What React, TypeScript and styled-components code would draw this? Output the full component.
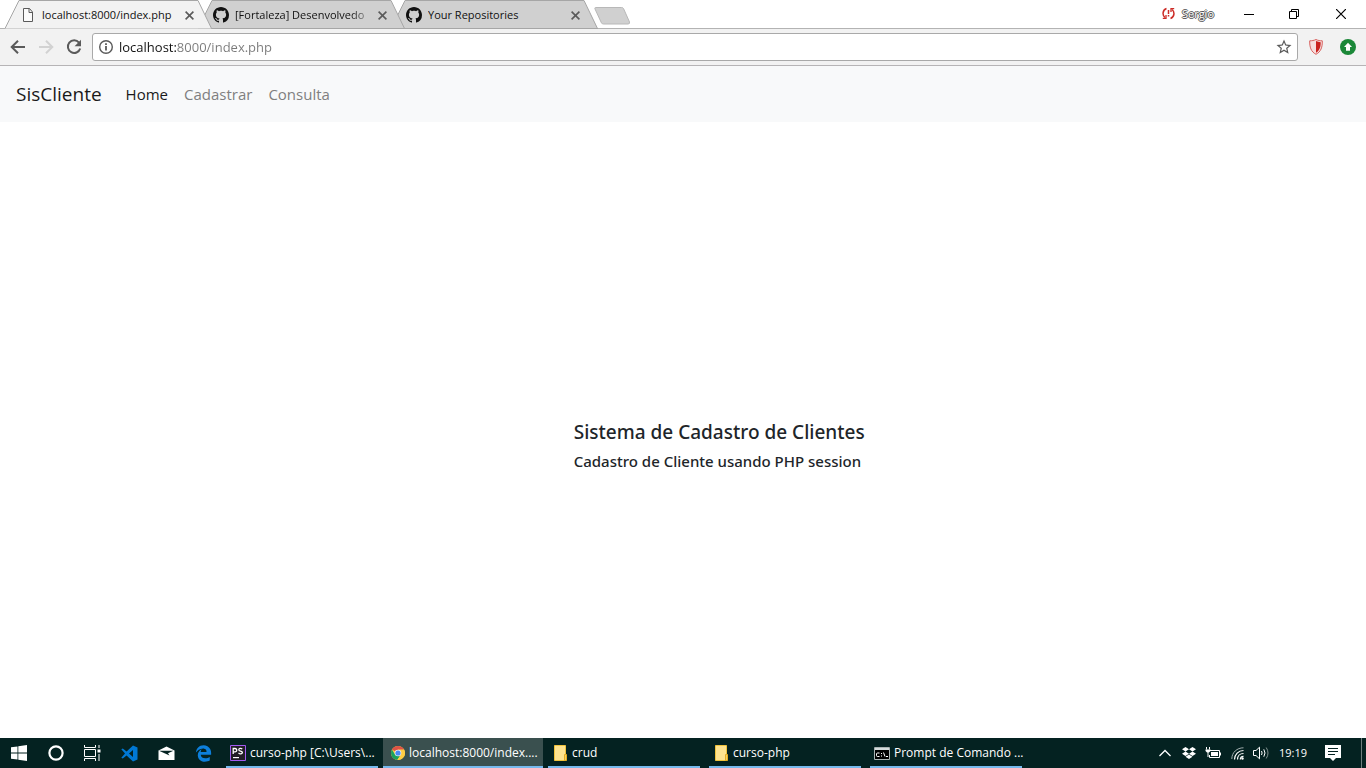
import React from "react";
import styled, { createGlobalStyle, css } from "styled-components";
import { FaDropbox, FaEdgeLegacy } from "react-icons/fa";
import { MdStarBorder } from "react-icons/md";

const GlobalStyle = createGlobalStyle`
  *, *::before, *::after { box-sizing: border-box; }
  body {
    margin: 0;
    background: #fff;
    color: #212529;
    font-family: "Open Sans", "Noto Sans", sans-serif;
  }
  button, input { font: inherit; }
  svg { display: block; flex: none; }
`;

const Screen = styled.div`
  display: flex;
  flex-direction: column;
  min-height: 100vh;
`;

/* Browser window */

const TitleBar = styled.header`
  display: flex;
  justify-content: space-between;
  height: 29px;
  padding-left: 5px;
  background: #fff;
  border-bottom: 1px solid #b3b3b3;
`;

const TabStrip = styled.div`
  display: flex;
  height: 29px;
`;

const Tab = styled.div<{ $level: number }>`
  position: relative;
  z-index: ${(p) => p.$level};
  display: flex;
  align-items: center;
  width: 207px;
  height: 29px;
  margin-right: -14px;
  padding: 1px 16px 0 15px;
`;

const TabShape = styled.svg`
  position: absolute;
  inset: 0;
  width: 100%;
  height: 100%;
`;

const TabButton = styled.button`
  position: relative;
  display: flex;
  flex: 1;
  align-items: center;
  gap: 6px;
  min-width: 0;
  padding: 0;
  border: 0;
  background: none;
  color: #111;
  font-size: 11px;
  line-height: 16px;
  text-align: left;
`;

const TabTitle = styled.span<{ $faded?: boolean }>`
  flex: 1;
  overflow: hidden;
  white-space: nowrap;
  ${(p) =>
    p.$faded &&
    css`
      mask-image: linear-gradient(to right, #000 calc(100% - 24px), transparent);
    `}
`;

const IconButton = styled.button<{ $width?: number }>`
  position: relative;
  display: flex;
  align-items: center;
  justify-content: center;
  flex: none;
  width: ${(p) => p.$width ?? 28}px;
  padding: 0;
  border: 0;
  background: none;
  color: #5a5a5a;
`;

const NewTab = styled.button`
  display: flex;
  margin-left: 10px;
  padding: 7px 0 0;
  border: 0;
  background: none;
`;

const WindowControls = styled.div`
  display: flex;
  height: 27px;
`;

const Profile = styled.button`
  display: flex;
  align-items: center;
  gap: 7px;
  margin-right: 12px;
  padding: 0;
  border: 0;
  background: none;
  color: #fff;
  font-size: 11px;
  line-height: 16px;
`;

const ProfileName = styled.span`
  text-shadow: 1px 0 #555, -1px 0 #555, 0 1px #555, 0 -1px #555;
`;

const Toolbar = styled.div`
  display: flex;
  align-items: center;
  height: 37px;
  padding: 0 2px 0 4px;
  background: #f2f2f2;
  border-bottom: 1px solid #b6b4b6;
`;

const AddressBar = styled.form`
  display: flex;
  flex: 1;
  align-items: center;
  height: 28px;
  margin: 0 2px 0 4px;
  padding: 0 5px;
  background: #fff;
  border: 1px solid #a9a9a9;
  border-radius: 3px;
`;

/* The host is dark, the rest of the address is grey. */
const AddressInput = styled.input`
  flex: 1;
  min-width: 0;
  padding: 0 0 0 5px;
  border: 0;
  outline: 0;
  background: linear-gradient(to right, #111 62px, #7a7a7a 62px);
  background-clip: text;
  color: transparent;
  font-size: 13px;
  line-height: 20px;
`;

/* Web page */

const Navbar = styled.nav`
  display: flex;
  align-items: center;
  height: 56px;
  padding: 0 16px;
  background: #f8f9fa;
`;

const Brand = styled.a`
  margin-right: 16px;
  color: #1a1a1a;
  font-size: 19px;
  line-height: 30px;
  text-decoration: none;
`;

const NavLink = styled.a<{ $active?: boolean }>`
  padding: 0 8px;
  color: ${(p) => (p.$active ? "#1a1a1a" : "#7f7f80")};
  font-size: 15px;
  line-height: 24px;
  text-decoration: none;
`;

const Content = styled.main`
  display: flex;
  flex: 1;
  flex-direction: column;
  justify-content: center;
  padding: 38px 0 0 42%;
  font-family: "Noto Sans", "Open Sans", sans-serif;
`;

const Title = styled.h5`
  margin: 0 0 8px;
  font-size: 19px;
  font-weight: 500;
  line-height: 24px;
`;

const Subtitle = styled.h6`
  margin: 0 0 8px;
  font-size: 15px;
  font-weight: 500;
  line-height: 19px;
`;

/* Taskbar */

const Taskbar = styled.footer`
  display: flex;
  height: 30px;
  background: #042221;
  color: #fff;
`;

const Launchers = styled.div`
  display: flex;
  width: 222px;
`;

const TaskIcon = styled.button`
  display: flex;
  flex: 1;
  align-items: center;
  justify-content: center;
  padding: 0;
  border: 0;
  background: none;
  color: #fff;
`;

const Tasks = styled.div`
  display: flex;
  flex: 1;
  gap: 1px;
`;

const Task = styled.button<{ $active?: boolean }>`
  position: relative;
  display: flex;
  align-items: center;
  gap: 4px;
  width: 160px;
  padding: 0 8px;
  border: 0;
  background: ${(p) => (p.$active ? "#3a504f" : "none")};
  color: #fff;
  font-size: 12px;
  line-height: 16px;
  text-align: left;
  white-space: nowrap;

  &::after {
    content: "";
    position: absolute;
    right: ${(p) => (p.$active ? 0 : 4)}px;
    bottom: 0;
    left: ${(p) => (p.$active ? 0 : 4)}px;
    height: 2px;
    background: #76b9ed;
  }
`;

const TaskGlyph = styled.span`
  display: flex;
  justify-content: center;
  width: 16px;
`;

const Tray = styled.div`
  display: flex;
  align-items: center;
  padding-right: 8px;
  border-right: 1px solid #6d7f7e;
  margin-right: 4px;
`;

const TrayButton = styled.button<{ $width: number }>`
  display: flex;
  align-items: center;
  justify-content: center;
  width: ${(p) => p.$width}px;
  height: 30px;
  padding: 0;
  border: 0;
  background: none;
  color: #fff;
  font-size: 11px;
  line-height: 16px;
`;

const BackIcon = () => (
  <svg width="16" height="16" viewBox="0 0 16 16" fill="none" stroke="#5a5a5a" strokeWidth="2">
    <path d="M15 8H2.500M8 1.700L1.700 8 8 14.300" />
  </svg>
);

const ForwardIcon = () => (
  <svg width="16" height="16" viewBox="0 0 16 16" fill="none" stroke="#d2d2d2" strokeWidth="2">
    <path d="M1 8h12.500M8 1.700L14.300 8 8 14.300" />
  </svg>
);

const ReloadIcon = () => (
  <svg width="16" height="16" viewBox="0 0 16 16">
    <path d="M13 3.600A6.300 6.300 0 1 0 14.200 9.500" fill="none" stroke="#5a5a5a" strokeWidth="2" />
    <path d="M15 .8v6.400H8.600z" fill="#5a5a5a" />
  </svg>
);

const CloseIcon = () => (
  <svg width="9" height="9" viewBox="0 0 9 9" stroke="#5a5a5a" strokeWidth="1.6">
    <path d="M.6.6l7.8 7.8M8.4.6L.6 8.4" />
  </svg>
);

const PageIcon = () => (
  <svg width="16" height="16" viewBox="0 0 16 16" fill="#fbfbfb" stroke="#5a5a5a">
    <path d="M3.500 1.500h6l3 3.500v9.500h-9zM9 1.500V5.500h3.500" />
  </svg>
);

const GithubMark = () => (
  <svg width="16" height="16" viewBox="0 0 16 16" fill="#111">
    <path d="M8 0C3.580 0 0 3.580 0 8c0 3.540 2.290 6.530 5.470 7.590.4.070.55-.17.55-.38 0-.19-.01-.82-.01-1.490-2.010.37-2.530-.49-2.690-.94-.09-.23-.48-.94-.82-1.130-.28-.15-.68-.52-.01-.53.63-.01 1.080.58 1.230.82.72 1.210 1.870.87 2.330.66.07-.52.28-.87.51-1.070-1.780-.2-3.640-.89-3.640-3.950 0-.87.31-1.590.82-2.150-.08-.2-.36-1.020.08-2.120 0 0 .67-.21 2.200.82.64-.18 1.320-.27 2-.27.68 0 1.360.09 2 .27 1.530-1.040 2.200-.82 2.200-.82.44 1.100.16 1.920.08 2.120.51.56.82 1.270.82 2.150 0 3.070-1.870 3.750-3.650 3.950.29.25.54.73.54 1.480 0 1.070-.01 1.930-.01 2.200 0 .21.15.46.55.38A8.013 8.013 0 0 0 16 8c0-4.420-3.580-8-8-8z" />
  </svg>
);

const InfoIcon = () => (
  <svg width="16" height="16" viewBox="0 0 16 16" fill="none" stroke="#5a5a5a">
    <circle cx="8" cy="8" r="6.300" strokeWidth="1.400" />
    <path d="M8 7v4.500M8 4.300v1.700" strokeWidth="1.800" />
  </svg>
);

const SyncErrorIcon = () => (
  <svg width="13" height="13" viewBox="0 0 13 13" fill="none" stroke="#cc2b26" strokeWidth="1.500">
    <path d="M4.500 1.500C.2 3 .2 8.500 3 10.500M8.500 11.500c4.300-1.500 4.300-7 1.500-9M6.500 3v4M6.500 8v1.500" />
    <path d="M.8 11.300h3.200V8M12.200 1.700H9V5" strokeWidth="1.300" />
  </svg>
);

const ShieldIcon = () => (
  <svg width="16" height="18" viewBox="0 0 16 18">
    <path d="M8 1.500c2 1 4 1.300 6.300 1.300.2 6.200-1.300 11-6.300 13.500C3 13.800 1.500 9 1.700 2.800 4 2.800 6 2.500 8 1.500z" fill="#f6dddd" stroke="#d9625f" />
    <path d="M8 3c1.500.7 3 1 4.700 1.200 0 4.800-1.200 8.500-4.700 10.600z" fill="#c9211e" />
  </svg>
);

const UpdateIcon = () => (
  <svg width="16" height="16" viewBox="0 0 16 16">
    <circle cx="8" cy="8" r="8" fill="#1b8838" />
    <path d="M8 3.800L12 8h-2v3.800H6V8H4z" fill="#fff" />
  </svg>
);

const WindowsIcon = () => (
  <svg width="16" height="16" viewBox="0 0 16 16" fill="#fff">
    <path d="M0 2.300L6.500 1.400v6.200H0zM7.300 1.300L16 0v7.600H7.300zM0 8.400h6.500v6.200L0 13.700zM7.300 8.400H16V16l-8.700-1.300z" />
  </svg>
);

const CortanaIcon = () => (
  <svg width="16" height="16" viewBox="0 0 16 16" fill="none" stroke="#fff" strokeWidth="2.200">
    <circle cx="8" cy="8" r="6.600" />
  </svg>
);

const TaskViewIcon = () => (
  <svg width="17" height="16" viewBox="0 0 17 16" fill="none" stroke="#fff">
    <path d="M.5 0v2.500h11V0M.5 16v-2.500h11V16M.5 4.500h11v7H.5zM15 0v3M15 9v7" />
    <path d="M13.500 4.500h3v3h-3z" fill="#fff" stroke="none" />
  </svg>
);

const CodeIcon = () => (
  <svg width="17" height="17" viewBox="0 0 17 17" fill="#0078d4">
    <path fillRule="evenodd" d="M12 .5l4.500 2v12l-4.500 2-6.400-6-3.800 3L.3 12.700 4 8.500.3 4.300l1.500-.8 3.800 3zM12 5L8 8.500l4 3.500z" />
  </svg>
);

const MailIcon = () => (
  <svg width="17" height="14" viewBox="0 0 17 14">
    <path d="M.5 4.500L8.500.5l8 4V14H.5z" fill="#fff" />
    <path d="M1 4.800h14.500L10 7.200l1.500 2.300z" fill="#042221" />
  </svg>
);

const PhpStormIcon = () => (
  <svg width="16" height="16" viewBox="0 0 16 16">
    <path d="M.5.5h15v15H.5z" fill="#221e26" stroke="#a35bf2" />
    <path d="M3.200 9V3.500H5c2.300 0 2.300 3.300 0 3.300H3.200M12.300 4c-1.500-1-3.500-.6-3.500.7C8.800 6.500 12.400 5.700 12.400 7.500c0 1.500-2.500 1.700-3.900.6" fill="none" stroke="#fff" strokeWidth="1.300" />
    <path d="M3 12h6v1.200H3z" fill="#fff" />
  </svg>
);

const ChromeIcon = () => (
  <svg width="14" height="14" viewBox="0 0 14 14">
    <circle cx="7" cy="7" r="7" fill="#ffce44" />
    <path d="M7 7L.94 3.500A7 7 0 0 1 13.060 3.500z" fill="#de5246" />
    <path d="M.94 3.500A7 7 0 0 0 6.300 13.970L9.800 8.500 7 7 4 8.600z" fill="#1aa15f" />
    <path d="M7 3.500h6.060A7 7 0 0 1 6.300 13.970L10 8.700z" fill="#ffce44" />
    <circle cx="7" cy="7" r="3.300" fill="#f1f1f1" />
    <circle cx="7" cy="7" r="2.600" fill="#4a8af4" />
  </svg>
);

const FolderIcon = () => (
  <svg width="14" height="16" viewBox="0 0 14 16">
    <path d="M1.500.5h11v15h-11z" fill="#ffe48f" stroke="#f0c33c" />
    <path d="M11.500 9.500h2v6h-2z" fill="#f7d060" stroke="#e5ad20" />
  </svg>
);

const ConsoleIcon = () => (
  <svg width="16" height="13" viewBox="0 0 16 13">
    <path d="M.5.5h15v12H.5z" fill="#000" stroke="#a9b2b2" />
    <path d="M1 1h14v2H1z" fill="#d4dcdc" />
    <path d="M5.500 6H3.500Q2.500 6 2.500 7v1.500q0 1 1 1h2M7.500 6v1M7.500 8.500v1M9.500 5.500l1.500 4M12 9.500h2" fill="none" stroke="#fff" />
  </svg>
);

const ChevronIcon = () => (
  <svg width="12" height="8" viewBox="0 0 12 8" fill="none" stroke="#fff" strokeWidth="1.300">
    <path d="M.5 7L6 1.500 11.500 7" />
  </svg>
);

const BatteryIcon = () => (
  <svg width="16" height="12" viewBox="0 0 16 12" fill="none" stroke="#fff">
    <path d="M5 3.500h9.500v7H4.500V8M15.500 5.500v3M1.500 0v2.500M4.500 0v2.500M3 5v5" />
    <path d="M6 5h7v4H6zM.5 2.500h5V4L4 5.500H2L.5 4z" fill="#fff" stroke="none" />
  </svg>
);

const WifiIcon = () => (
  <svg width="13" height="13" viewBox="0 0 13 13" fill="none" stroke="#fff">
    <path d="M.8 12C.8 5.500 6 .8 12.500.8" stroke="#a0adad" />
    <path d="M3.500 12.500c0-5 4-9 9-9M6.500 12.500c0-3.500 2.500-6 6-6" strokeWidth="1.200" />
    <path d="M9.300 12.500c0-2 1.200-3.200 3.200-3.200" strokeWidth="1.200" />
    <circle cx="11.500" cy="11.500" r="1.200" fill="#fff" stroke="none" />
  </svg>
);

const VolumeIcon = () => (
  <svg width="16" height="14" viewBox="0 0 16 14" fill="none" stroke="#fff">
    <path d="M.5 4.500H3L6.500 1.200v11.600L3 9.500H.5zM8.500 5q1.200 2 0 4M10.800 3.300q2.400 3.700 0 7.400" />
    <path d="M13.200 1.500q3.600 5.500 0 11" stroke="#82918f" />
  </svg>
);

const NoticeIcon = () => (
  <svg width="16" height="16" viewBox="0 0 16 16">
    <path d="M0 0h16v13h-5l-3 3-3-3H0z" fill="#fff" />
    <path d="M3 3.500h10M3 6.500h10M3 9.500h7" stroke="#042221" />
  </svg>
);

type TabItem = { title: string; icon: React.ReactNode; active?: boolean; faded?: boolean };

const tabs: TabItem[] = [
  { title: "localhost:8000/index.php", icon: <PageIcon />, active: true },
  { title: "[Fortaleza] Desenvolvedo", icon: <GithubMark />, faded: true },
  { title: "Your Repositories", icon: <GithubMark /> },
];

const launchers = [
  { label: "Iniciar", icon: <WindowsIcon /> },
  { label: "Cortana", icon: <CortanaIcon /> },
  { label: "Visão de tarefas", icon: <TaskViewIcon /> },
  { label: "Visual Studio Code", icon: <CodeIcon /> },
  { label: "Email", icon: <MailIcon /> },
  { label: "Microsoft Edge", icon: <FaEdgeLegacy size={17} color="#0d7fdb" /> },
];

const tasks = [
  { title: "curso-php [C:\\Users\\...", icon: <PhpStormIcon /> },
  { title: "localhost:8000/index....", icon: <ChromeIcon />, active: true },
  { title: "crud", icon: <FolderIcon /> },
  { title: "curso-php", icon: <FolderIcon /> },
  { title: "Prompt de Comando ...", icon: <ConsoleIcon /> },
];

export default function App() {
  return (
    <Screen>
      <GlobalStyle />
      <TitleBar>
        <TabStrip>
          {tabs.map((tab, i) => (
            <Tab key={tab.title} $level={tabs.length - i}>
              <TabShape viewBox="0 0 207 29" preserveAspectRatio="none">
                <path d="M0 28.500L14 .5h179l13.500 28z" fill={tab.active ? "#f2f2f2" : "#d0d0d0"} />
                <path d="M0 28.500L14 .5h179l13.500 28" fill="none" stroke="#a6a6a6" />
                {!tab.active && <path d="M0 28.500h207" stroke="#a6a6a6" />}
              </TabShape>
              <TabButton>
                {tab.icon}
                <TabTitle $faded={tab.faded}>{tab.title}</TabTitle>
              </TabButton>
              <IconButton $width={14} aria-label="Fechar guia">
                <CloseIcon />
              </IconButton>
            </Tab>
          ))}
          <NewTab aria-label="Nova guia">
            <svg width="36" height="18" viewBox="0 0 36 18">
              <path d="M1.500.5h26q1.500 0 2 1l6 13.500q.5 2-1.500 2H9.500q-1.500 0-2-1L1 2Q.5.5 1.500.5z" fill="#d0d0d0" stroke="#b8b8b8" />
            </svg>
          </NewTab>
        </TabStrip>
        <WindowControls>
          <Profile>
            <SyncErrorIcon />
            <ProfileName>Sergio</ProfileName>
          </Profile>
          <IconButton $width={46} aria-label="Minimizar">
            <svg width="10" height="10" viewBox="0 0 10 10" stroke="#000"><path d="M0 5.500h10" /></svg>
          </IconButton>
          <IconButton $width={44} aria-label="Restaurar">
            <svg width="10" height="10" viewBox="0 0 10 10" fill="none" stroke="#000">
              <path d="M.5 2.500h7v7h-7zM2.500 2.500v-2h7v7h-2" />
            </svg>
          </IconButton>
          <IconButton $width={50} aria-label="Fechar">
            <svg width="10" height="10" viewBox="0 0 10 10" stroke="#000" strokeWidth="1.200"><path d="M0 0l10 10M10 0L0 10" /></svg>
          </IconButton>
        </WindowControls>
      </TitleBar>
      <Toolbar>
        <IconButton aria-label="Voltar"><BackIcon /></IconButton>
        <IconButton aria-label="Avançar"><ForwardIcon /></IconButton>
        <IconButton aria-label="Recarregar"><ReloadIcon /></IconButton>
        <AddressBar>
          <InfoIcon />
          <AddressInput aria-label="Endereço" defaultValue="localhost:8000/index.php" />
          <IconButton $width={16} type="button" aria-label="Favoritar"><MdStarBorder size={18} /></IconButton>
        </AddressBar>
        <IconButton $width={32} aria-label="Escudo"><ShieldIcon /></IconButton>
        <IconButton $width={32} aria-label="Atualizar"><UpdateIcon /></IconButton>
      </Toolbar>
      <Navbar>
        <Brand href="#">SisCliente</Brand>
        <NavLink href="#" $active>Home</NavLink>
        <NavLink href="#">Cadastrar</NavLink>
        <NavLink href="#">Consulta</NavLink>
      </Navbar>
      <Content>
        <Title>Sistema de Cadastro de Clientes</Title>
        <Subtitle>Cadastro de Cliente usando PHP session</Subtitle>
      </Content>
      <Taskbar>
        <Launchers>
          {launchers.map((l) => (
            <TaskIcon key={l.label} aria-label={l.label}>{l.icon}</TaskIcon>
          ))}
        </Launchers>
        <Tasks>
          {tasks.map((t, i) => (
            <Task key={i} $active={t.active}>
              <TaskGlyph>{t.icon}</TaskGlyph>
              <span>{t.title}</span>
            </Task>
          ))}
        </Tasks>
        <Tray>
          <TrayButton $width={24} aria-label="Ícones ocultos"><ChevronIcon /></TrayButton>
          <TrayButton $width={24} aria-label="Dropbox"><FaDropbox size={14} /></TrayButton>
          <TrayButton $width={24} aria-label="Bateria"><BatteryIcon /></TrayButton>
          <TrayButton $width={24} aria-label="Rede"><WifiIcon /></TrayButton>
          <TrayButton $width={24} aria-label="Volume"><VolumeIcon /></TrayButton>
          <TrayButton $width={40}>19:19</TrayButton>
          <TrayButton $width={40} aria-label="Notificações"><NoticeIcon /></TrayButton>
        </Tray>
      </Taskbar>
    </Screen>
  );
}
